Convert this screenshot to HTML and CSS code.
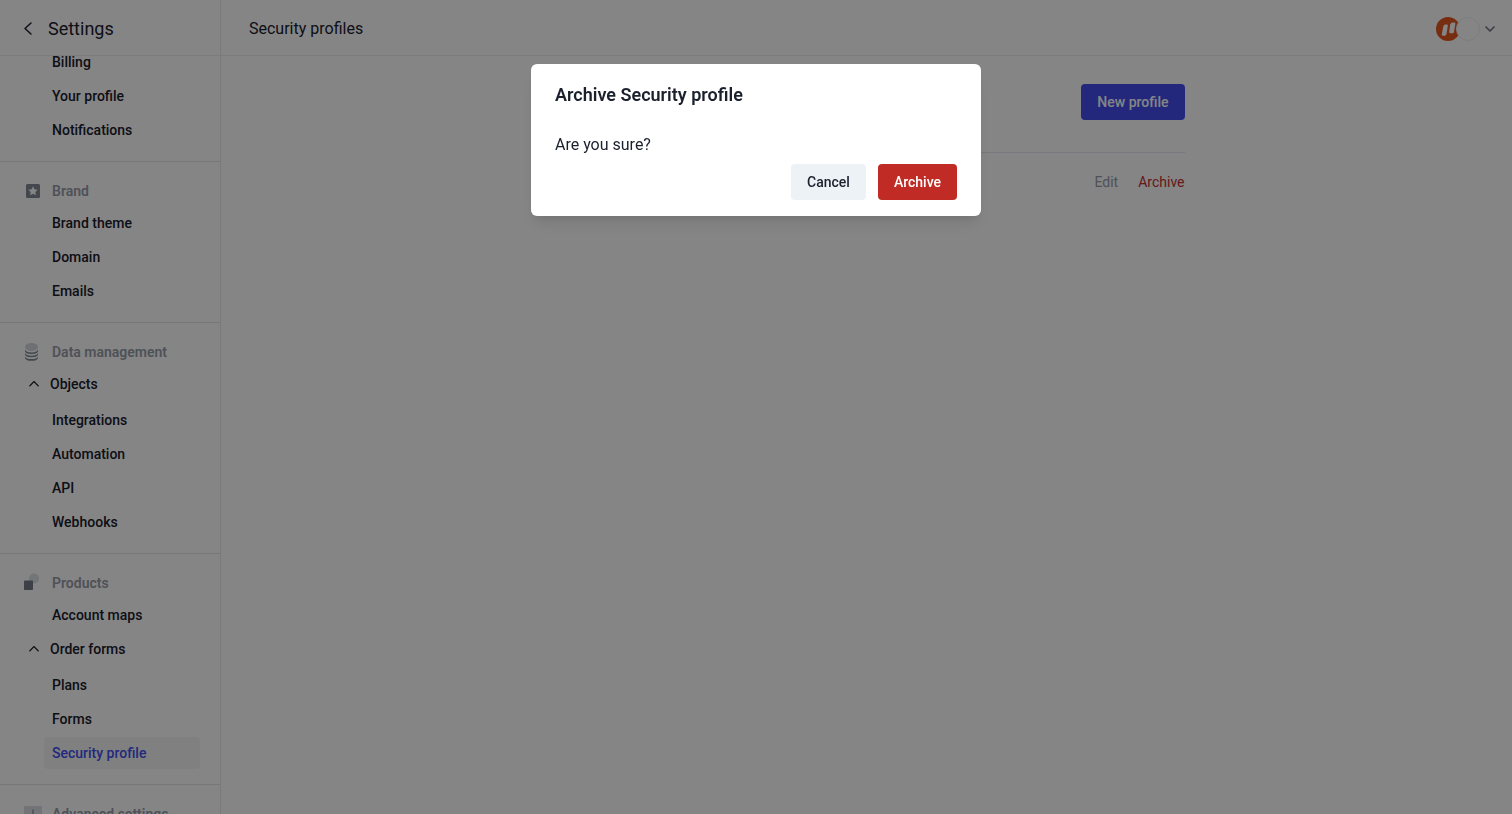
FILE: index.html
```html
<!DOCTYPE html>
<html lang="en">
<head>
<meta charset="utf-8">
<meta name="viewport" content="width=device-width, initial-scale=1">
<title>Security profiles</title>
<link rel="stylesheet" href="styles.css">
</head>
<body>
<div class="app">
  <aside class="sidebar">
    <div class="sidebar-head">
      <a class="back" href="#" aria-label="Back"><svg width="16" height="16" viewBox="0 0 16 16"><path d="M11 2 5 7.500l6 5.500" fill="none" stroke="currentColor" stroke-width="1.500" stroke-linecap="round" stroke-linejoin="round"/></svg></a>
      <span class="sidebar-title">Settings</span>
    </div>
    <nav class="nav" aria-label="Settings">
      <div class="nav-scroll">
        <section class="group group-first">
          <a class="item" href="#">Billing</a>
          <a class="item" href="#">Your profile</a>
          <a class="item" href="#">Notifications</a>
        </section>
        <section class="group">
          <h2 class="group-title"><svg class="group-icon" width="20" height="20" viewBox="0 0 20 20"><rect x="4" y="3" width="14" height="14" rx="1.500" fill="#838896"/><path d="m11 5.200 1.400 3.100 3.300.4-2.400 2.300.6 3.300L11 12.700l-2.900 1.600.6-3.300-2.400-2.300 3.300-.4z" fill="#fff"/></svg>Brand</h2>
          <a class="item" href="#">Brand theme</a>
          <a class="item" href="#">Domain</a>
          <a class="item" href="#">Emails</a>
        </section>
        <section class="group">
          <h2 class="group-title"><svg class="group-icon" width="20" height="20" viewBox="0 0 20 20"><ellipse cx="9.500" cy="5" rx="6.500" ry="4" fill="#d3d6dd"/><path d="M3 7.500q1 2.900 6.500 2.900T16 7.500v1.900q-1 2.500-6.500 2.500T3 9.400zM3 11q1 2.800 6.500 2.800T16 11v1.800q-1 2.500-6.500 2.500T3 12.800zM3 14.400q1 2.700 6.500 2.700t6.500-2.700v1.500q-1 2.900-6.500 2.900T3 15.900z" fill="#838896"/></svg>Data management</h2>
          <button class="item toggle" type="button" aria-expanded="true"><svg class="caret" width="12" height="12" viewBox="0 0 12 12"><path d="m1.700 8 4.300-4.500L10.300 8" fill="none" stroke="currentColor" stroke-width="1.100" stroke-linecap="round" stroke-linejoin="round"/></svg>Objects</button>
          <a class="item" href="#">Integrations</a>
          <a class="item" href="#">Automation</a>
          <a class="item" href="#">API</a>
          <a class="item" href="#">Webhooks</a>
        </section>
        <section class="group">
          <h2 class="group-title"><svg class="group-icon" width="20" height="20" viewBox="0 0 20 20"><circle cx="12" cy="5.500" r="5" fill="#dfe1e6"/><rect x="2" y="7.500" width="9" height="9.500" rx=".8" fill="#777b89"/></svg>Products</h2>
          <a class="item" href="#">Account maps</a>
          <button class="item toggle" type="button" aria-expanded="true"><svg class="caret" width="12" height="12" viewBox="0 0 12 12"><path d="m1.700 8 4.300-4.500L10.300 8" fill="none" stroke="currentColor" stroke-width="1.100" stroke-linecap="round" stroke-linejoin="round"/></svg>Order forms</button>
          <a class="item" href="#">Plans</a>
          <a class="item" href="#">Forms</a>
          <a class="item active" href="#" aria-current="page">Security profile</a>
        </section>
        <section class="group">
          <h2 class="group-title"><svg class="group-icon" width="20" height="20" viewBox="0 0 20 20"><rect x="2" y="2" width="18" height="18" rx="1" fill="#dcdfe6"/><path d="M11 5.500v7M11 14.500v1.500" stroke="#9da3af" stroke-width="1.800"/></svg>Advanced settings</h2>
        </section>
      </div>
    </nav>
  </aside>
  <div class="page">
    <header class="topbar">
      <h1 class="page-title">Security profiles</h1>
      <button class="account" type="button" aria-label="Account menu">
        <svg width="44" height="24" viewBox="0 0 44 24"><circle cx="12" cy="12" r="12" fill="#e4571f"/><path d="M7.400 9q.4-1.500 1.900-1.500h1.500q1.200 0 1 1.200L10.500 17q-.3 1.700-1.900 1.700H7q-1.500 0-1.200-1.500zM14.200 7.600q.7-2 2.400-2h1.600q1.300 0 1.100 1.300l-1.300 8q-.3 1.300-1.600 1.300h-1.900q-1.500 0-1.300-1.500z" fill="#fff"/><circle cx="32" cy="12" r="11.500" fill="#fff" stroke="#f0f0f2"/></svg>
        <svg width="12" height="12" viewBox="0 0 12 12"><path d="m2 4 4 4 4-4" fill="none" stroke="#777b89" stroke-width="1.700" stroke-linecap="round" stroke-linejoin="round"/></svg>
      </button>
    </header>
    <main class="content">
      <div class="actions"><button class="btn btn-primary" type="button">New profile</button></div>
      <div class="row">
        <a class="link" href="#">Edit</a>
        <a class="link link-danger" href="#">Archive</a>
      </div>
    </main>
  </div>
</div>
<div class="overlay">
  <div class="dialog" role="alertdialog" aria-modal="true" aria-labelledby="dialog-title" aria-describedby="dialog-text">
    <h2 class="dialog-title" id="dialog-title">Archive Security profile</h2>
    <p class="dialog-text" id="dialog-text">Are you sure?</p>
    <div class="dialog-actions">
      <button class="btn btn-plain" type="button">Cancel</button>
      <button class="btn btn-danger" type="button">Archive</button>
    </div>
  </div>
</div>
</body>
</html>
```
FILE: styles.css
```css
* { box-sizing: border-box; }
body {
  margin: 0;
  background: #fff;
  color: #1a202c;
  font: 400 14px/20px Roboto, "Liberation Sans", sans-serif;
}
h1, h2, p { margin: 0; }
a { color: inherit; text-decoration: none; }
button { border: 0; padding: 0; background: none; color: inherit; font: inherit; cursor: pointer; }
svg { display: block; flex: none; }

.app { display: flex; height: 100vh; overflow: hidden; }
.sidebar { display: flex; flex-direction: column; flex: 0 0 221px; border-right: 1px solid #e9eaee; }
.sidebar-head {
  display: flex;
  align-items: center;
  gap: 12px;
  flex: 0 0 56px;
  padding: 2px 20px 0;
  border-bottom: 1px solid #edeef1;
}
.sidebar-title { font-size: 18px; line-height: 24px; }
.nav { flex: 1; min-height: 0; overflow: hidden; }
.nav-scroll { margin-top: -10px; }
.group { display: flex; flex-direction: column; padding: 13px 20px 15px 44px; border-top: 1px solid #e2e4e9; }
.group-first { padding-top: 0; border-top: 0; }
.group-title {
  display: flex;
  align-items: center;
  gap: 8px;
  height: 32px;
  margin-left: -20px;
  color: #979ca9;
  font-size: 14px;
  font-weight: 600;
  white-space: nowrap;
}
.group-icon { margin-left: -2px; margin-right: 2px; }
.item { height: 32px; padding: 6px 8px; border-radius: 4px; font-size: 14px; font-weight: 500; text-align: left; }
.item + .item { margin-top: 2px; }
.toggle { display: flex; align-items: center; gap: 10px; margin-left: -16px; padding: 0; }
.toggle + .item { margin-top: 4px; }
.active { background: #f5f5f6; color: #4450f0; }

.page { flex: 1; min-width: 0; }
.topbar {
  display: flex;
  align-items: center;
  justify-content: space-between;
  height: 56px;
  padding: 2px 16px 0 28px;
  border-bottom: 1px solid #edeef1;
}
.page-title { font-size: 16px; line-height: 24px; font-weight: 400; }
.account { display: flex; align-items: center; gap: 4px; }
.content { max-width: 636px; margin: 0 auto; padding-top: 28px; }
.actions { display: flex; justify-content: flex-end; padding-bottom: 32px; border-bottom: 1px solid #e2e8f0; }
.row { display: flex; justify-content: flex-end; gap: 20px; padding: 19px 0; }
.link { color: #979ca9; }
.link-danger { color: #c53030; }

.btn { height: 36px; padding: 0 16px; border-radius: 4px; font-size: 14px; font-weight: 500; }
.btn-primary { background: #434ef0; color: #fff; }
.btn-plain { background: #edf2f7; }
.btn-danger { background: #c02c25; color: #fff; }

.overlay {
  position: fixed;
  inset: 0;
  display: flex;
  align-items: flex-start;
  justify-content: center;
  padding: 64px 16px 16px;
  background: rgba(0, 0, 0, 0.48);
}
.dialog {
  width: 100%;
  max-width: 450px;
  padding: 17px 24px 16px;
  border-radius: 6px;
  background: #fff;
  box-shadow: 0 10px 15px -3px rgba(0, 0, 0, 0.1), 0 4px 6px -2px rgba(0, 0, 0, 0.05);
}
.dialog-title { font-size: 18px; line-height: 28px; font-weight: 600; }
.dialog-text { padding: 24px 0 7px; font-size: 16px; line-height: 24px; }
.dialog-actions { display: flex; justify-content: flex-end; gap: 12px; }
```
